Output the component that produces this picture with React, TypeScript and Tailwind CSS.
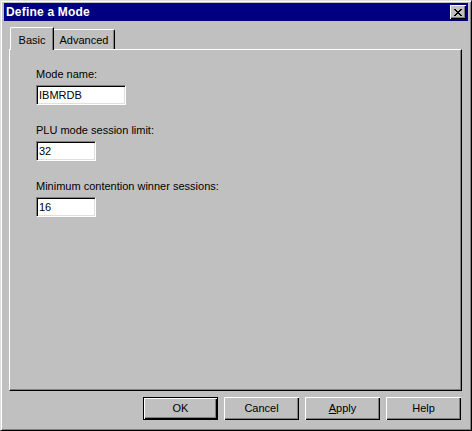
import React from "react";

const font = { fontFamily: '"Liberation Sans", Arial, sans-serif' };

function Field({ label, value, width }: { label: string; value: string; width: string }) {
  return (
    <div className="flex flex-col">
      <div className="text-[11px] leading-[13px] text-black h-[13px]">{label}</div>
      <div
        className={`mt-[4px] h-[20px] ${width} bg-white border border-t-[#808080] border-l-[#808080] border-r-white border-b-white shadow-[inset_1px_1px_#000,inset_-1px_-1px_#dfdfdf] flex items-center pl-[2px] text-[11px] text-black`}
      >
        <span className="relative">{value}</span>
      </div>
    </div>
  );
}

function Btn({ children, def }: { children: React.ReactNode; def?: boolean }) {
  return (
    <div
      className={`w-[75px] h-[23px] flex items-center justify-center text-[11px] text-black bg-[#c0c0c0] ${
        def
          ? "border border-black shadow-[inset_1px_1px_#fff,inset_-1px_-1px_#000,inset_-2px_-2px_#808080]"
          : "shadow-[inset_1px_1px_#fff,inset_-1px_-1px_#000,inset_-2px_-2px_#808080]"
      }`}
    >
      {children}
    </div>
  );
}

export default function App() {
  return (
    <div className="w-[472px] h-[431px] bg-white" style={font}>
      <div className="w-[472px] h-[431px] bg-[#c0c0c0] border border-t-[#dfdfdf] border-l-[#dfdfdf] border-r-black border-b-black shadow-[inset_1px_1px_#fff,inset_-1px_-1px_#808080] p-[3px] pt-[2px] flex flex-col">
        {/* Title bar */}
        <div className="h-[18px] bg-[#000080] flex items-center justify-between pl-[2px] pr-[2px]">
          <span className="text-white font-bold text-[12px] leading-none tracking-[0.2px]">Define a Mode</span>
          <div className="w-[16px] h-[14px] bg-[#c0c0c0] shadow-[inset_1px_1px_#fff,inset_-1px_-1px_#000,inset_-2px_-2px_#808080] flex items-center justify-center">
            <svg width="8" height="7" viewBox="0 0 8 7" shapeRendering="crispEdges">
              <path d="M0 0h2v1h-2zM6 0h2v1h-2zM1 1h2v1h-2zM5 1h2v1h-2zM2 2h4v1h-4zM3 3h2v1h-2zM2 4h4v1h-4zM1 5h2v1h-2zM5 5h2v1h-2zM0 6h2v1h-2zM6 6h2v1h-2z" fill="#000" />
            </svg>
          </div>
        </div>

        {/* Tabs + panel */}
        <div className="flex flex-col mt-[5px] ml-[5px] mr-[6px]">
          <div className="flex items-end h-[23px] pl-[1px]">
            <div className="relative z-10 h-[23px] w-[44px] -mb-[1px] bg-[#c0c0c0] border-t border-l border-white rounded-tl-[2px] border-r border-r-black shadow-[inset_-1px_0_#808080] flex items-start justify-center pt-[4px] text-[11px] text-black">
              Basic
            </div>
            <div className="h-[20px] w-[61px] bg-[#c0c0c0] border-t border-white border-r border-r-black rounded-tr-[2px] shadow-[inset_-1px_0_#808080] flex items-start justify-center pt-[2px] text-[11px] text-black">
              Advanced
            </div>
          </div>
          <div className="h-[342px] border border-t-white border-l-white border-r-black border-b-black shadow-[inset_-1px_-1px_#808080] pt-[18px] pl-[26px] flex flex-col gap-[19px]">
            <Field label="Mode name:" value="IBMRDB" width="w-[90px]" />
            <Field label="PLU mode session limit:" value="32" width="w-[60px]" />
            <Field label="Minimum contention winner sessions:" value="16" width="w-[60px]" />
          </div>
        </div>

        {/* Buttons */}
        <div className="flex justify-end gap-[6px] mt-[6px] pr-[7px]">
          <Btn def>OK</Btn>
          <Btn>Cancel</Btn>
          <Btn>
            <span>
              <span className="underline">A</span>pply
            </span>
          </Btn>
          <Btn>Help</Btn>
        </div>
      </div>
    </div>
  );
}
